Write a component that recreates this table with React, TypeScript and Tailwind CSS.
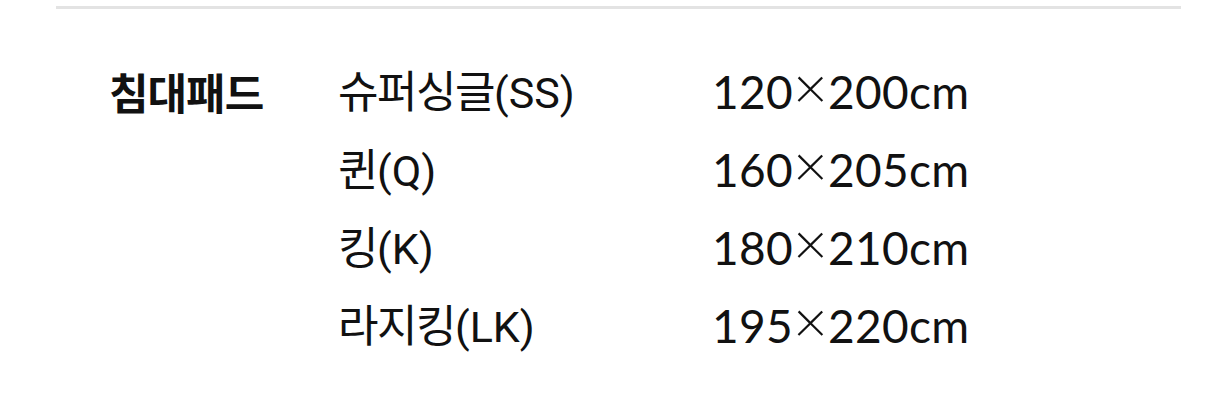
import React from "react";

const rows = [
  { ko: "슈퍼싱글", en: "(SS)", a: "120", b: "200cm" },
  { ko: "퀸", en: "(Q)", a: "160", b: "205cm" },
  { ko: "킹", en: "(K)", a: "180", b: "210cm" },
  { ko: "라지킹", en: "(LK)", a: "195", b: "220cm" },
];

export default function App() {
  return (
    <div className="w-[1206px] h-[400px] bg-white overflow-hidden" style={{ fontFamily: 'Roboto, "Noto Sans CJK KR", sans-serif' }}>
      <div className="ml-[56px] mr-[25px] mt-[6px] h-[3px] bg-[#e3e3e3]" />
      <div className="flex pl-[109px] pt-[44px] text-[#111]">
        <div className="w-[226px] text-[43px] font-bold leading-[78px] tracking-[-1px] pt-[3px]">침대패드</div>
        <div className="flex flex-col">
          {rows.map((r) => (
            <div key={r.a} className="flex h-[78px] items-center">
              <div className="w-[377px] leading-[78px] pl-[3px] pt-[12px]">
                <span className="text-[44px] tracking-[-1.5px]">{r.ko}</span>
                <span className="text-[43px]">{r.en}</span>
              </div>
              <div className="text-[46px] font-normal leading-[78px] tracking-[0.3px]" style={{ fontFamily: 'Lato, "Noto Sans", sans-serif' }}>
                {r.a}
                <span className="text-[60px] font-light leading-[0]">×</span>
                {r.b}
              </div>
            </div>
          ))}
        </div>
      </div>
    </div>
  );
}
